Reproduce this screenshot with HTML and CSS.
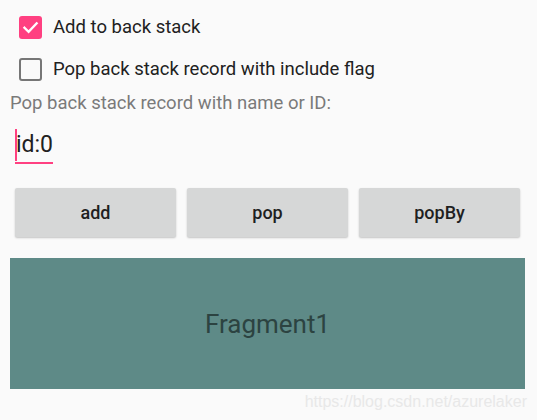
FILE: index.html
```html
<!DOCTYPE html>
<html>
<head>
<meta charset="utf-8">
<link rel="stylesheet" href="styles.css">
</head>
<body>
<div class="page">
  <div class="check-row">
    <span class="box checked">
      <svg viewBox="0 0 23 23" width="23" height="23"><path d="M5.5 11.8 L9.6 15.8 L17.6 7.4" fill="none" stroke="#fff" stroke-width="2.4" stroke-linecap="square"/></svg>
    </span>
    <span class="check-label">Add to back stack</span>
  </div>
  <div class="check-row">
    <span class="box"></span>
    <span class="check-label">Pop back stack record with include flag</span>
  </div>
  <div class="field-label">Pop back stack record with name or ID:</div>
  <div class="edit"><span class="cursor"></span><span class="edit-text">id:0</span></div>
  <div class="buttons">
    <button class="btn">add</button>
    <button class="btn">pop</button>
    <button class="btn">popBy</button>
  </div>
  <div class="fragment">Fragment1</div>
  <div class="watermark">https://blog.csdn.net/azurelaker</div>
</div>
</body>
</html>
```
FILE: styles.css
```css
html, body {
  margin: 0;
  padding: 0;
  background: #fafafa;
}
.page {
  font-family: Roboto, "Noto Sans", sans-serif;
  padding-top: 6px;
  width: 537px;
}
.check-row {
  height: 42px;
  display: flex;
  align-items: center;
  padding-left: 19px;
}
.box {
  width: 23px;
  height: 23px;
  box-sizing: border-box;
  border: 2.5px solid #767676;
  border-radius: 3px;
  margin-right: 11px;
  display: flex;
}
.box.checked {
  background: #ff4081;
  border: none;
}
.check-label {
  font-size: 18.5px;
  color: #212121;
}
.field-label {
  margin-top: 2px;
  padding-left: 10px;
  font-size: 18.5px;
  line-height: 22px;
  color: #7a7a7a;
}
.edit {
  margin: 15px 0 0 15px;
  display: inline-flex;
  align-items: flex-start;
  border-bottom: 2px solid #ff4081;
  padding-bottom: 1px;
  width: 38px;
}
.cursor {
  width: 2px;
  height: 32px;
  background: #ff4081;
  margin-right: -1px;
}
.edit-text {
  font-size: 23px;
  line-height: 32px;
  color: #212121;
}
.buttons {
  display: grid;
  grid-template-columns: repeat(3, 161px);
  gap: 11px;
  margin: 23px 0 0 15px;
}
.btn {
  height: 49px;
  border: none;
  border-radius: 2px;
  background: #d6d7d7;
  box-shadow: 0 1px 2px rgba(0, 0, 0, 0.22);
  font-family: Roboto, sans-serif;
  font-weight: 500;
  font-size: 18px;
  color: #1f1f1f;
  padding: 0;
}
.fragment {
  margin: 21px 12px 0 10px;
  height: 131px;
  background: #5e8a87;
  display: flex;
  align-items: center;
  justify-content: center;
  font-size: 26px;
  color: #2c4341;
}
.watermark {
  margin-top: 3px;
  padding-right: 10px;
  text-align: right;
  font-family: "Liberation Sans", Arial, sans-serif;
  font-size: 16px;
  line-height: 19px;
  color: #e8e8e8;
}
```
